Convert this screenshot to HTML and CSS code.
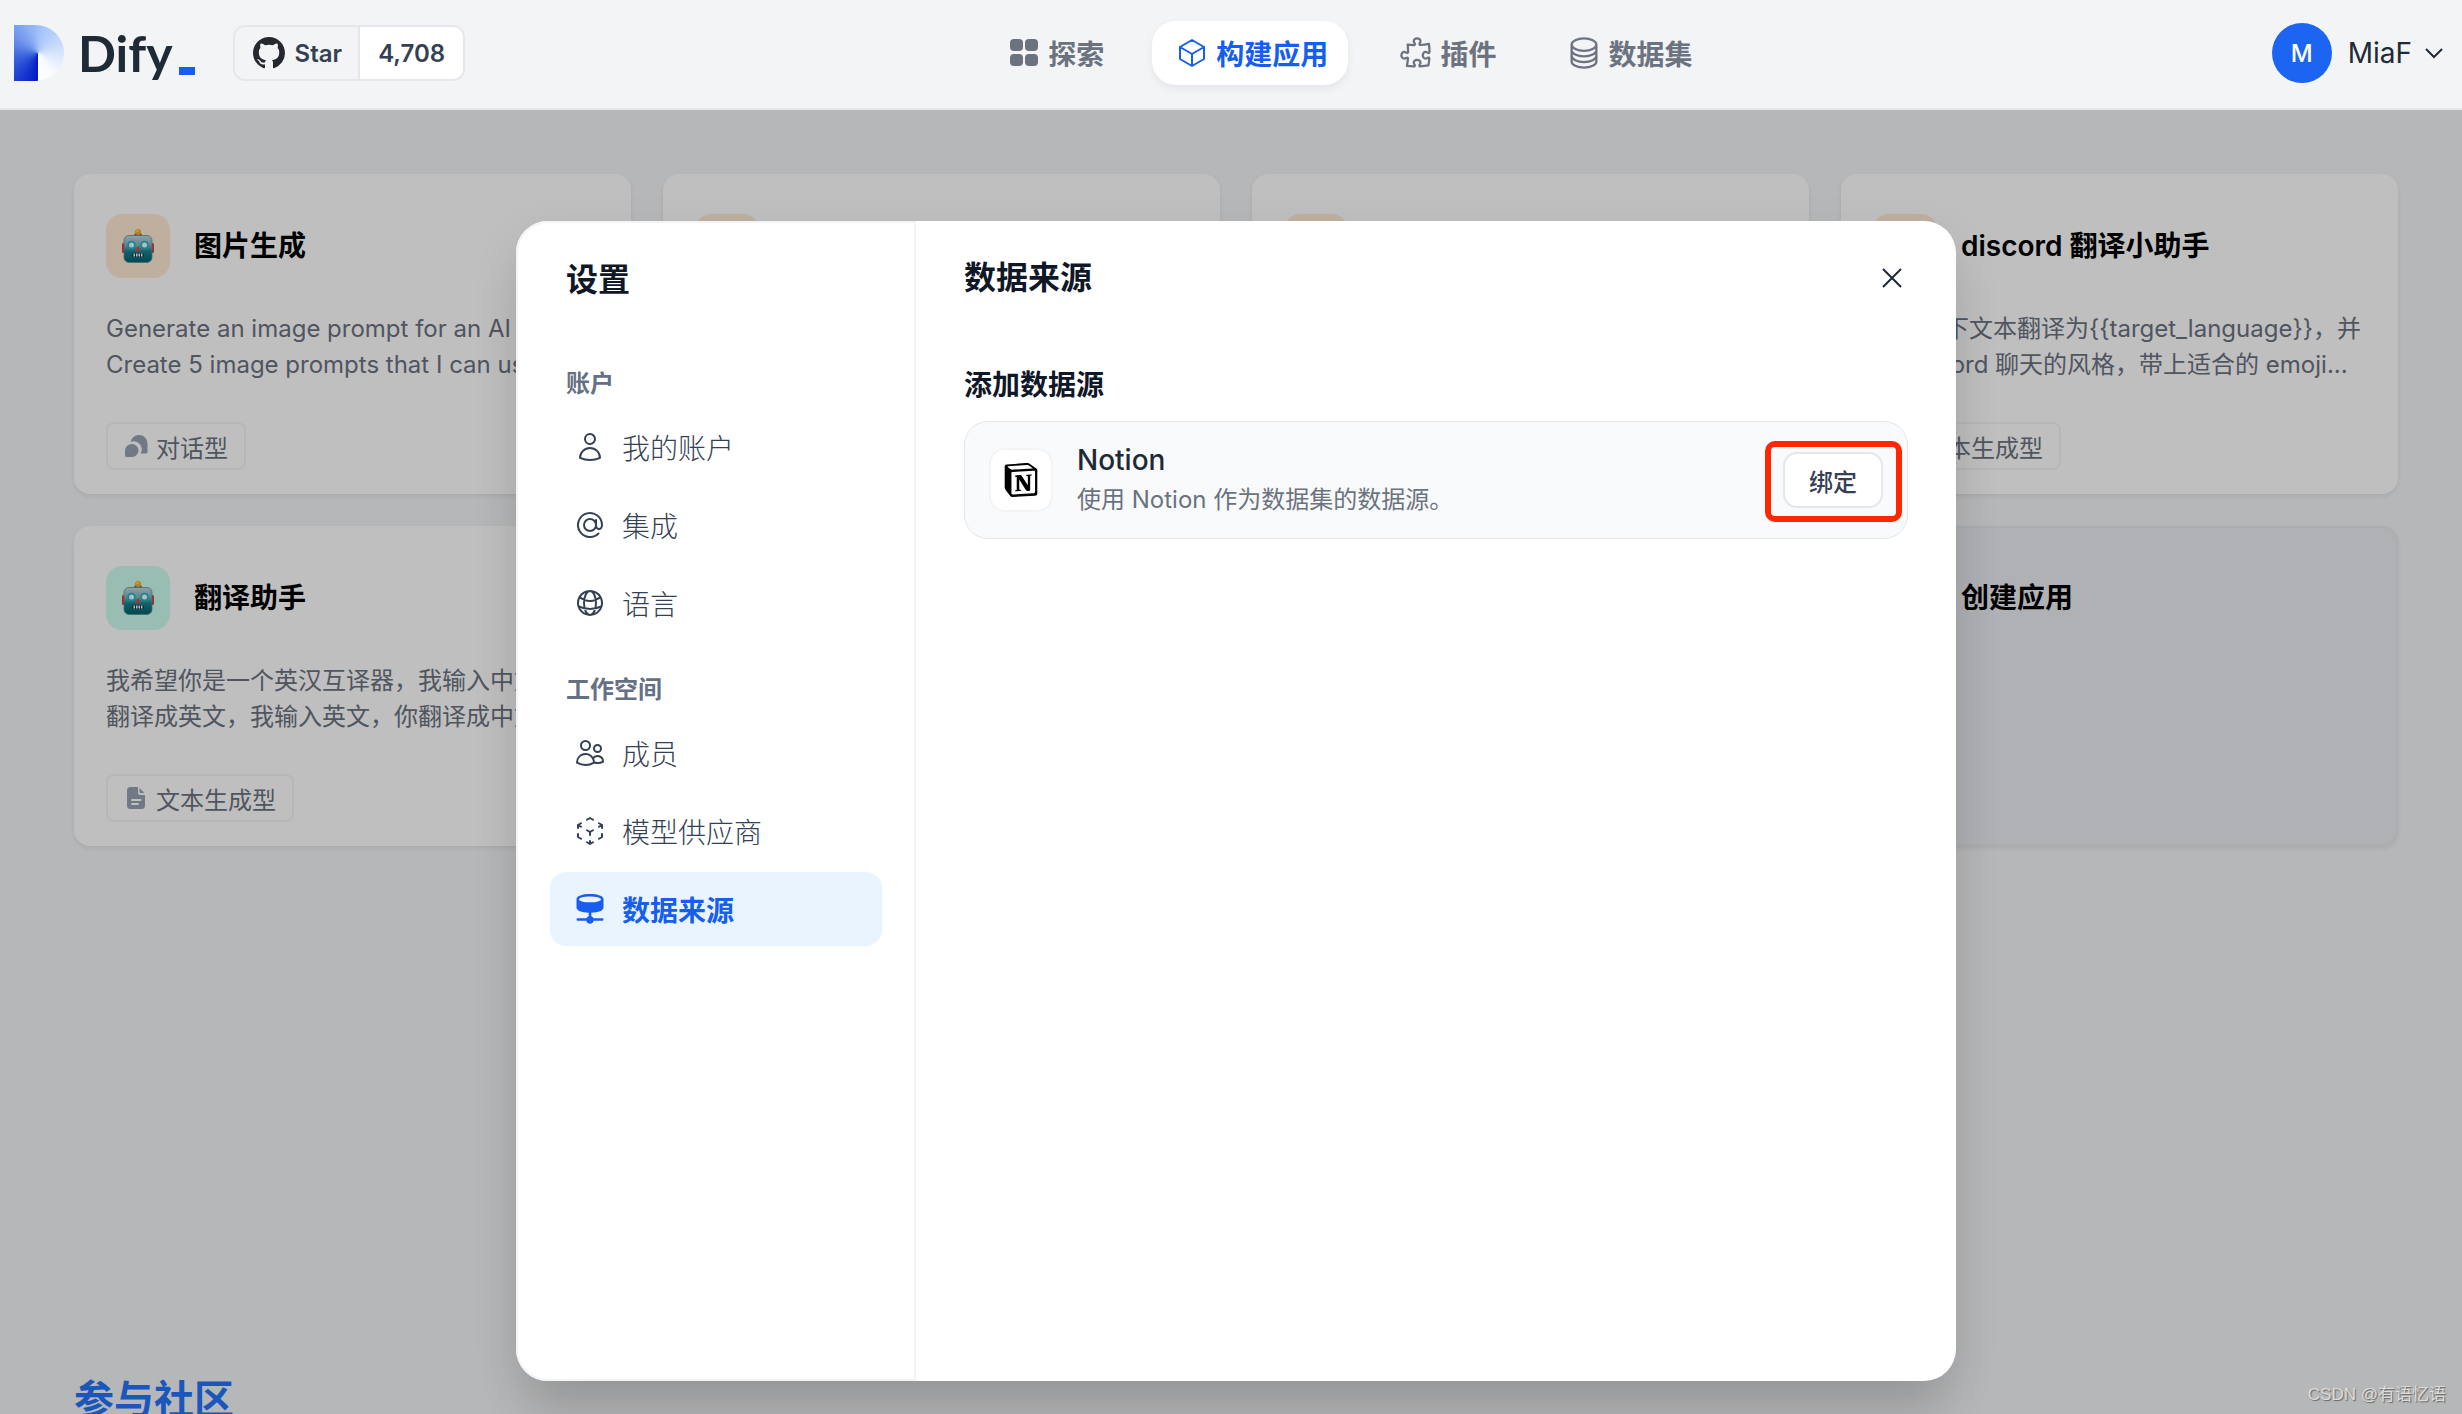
FILE: index.html
```html
<!DOCTYPE html>
<html lang="zh-CN">
<head>
<meta charset="utf-8">
<meta name="viewport" content="width=device-width, initial-scale=1">
<title>Dify</title>
<link rel="stylesheet" href="styles.css">
</head>
<body>
<svg class="defs" aria-hidden="true">
  <defs>
    <linearGradient id="face" x1="0" y1="0" x2="0" y2="1">
      <stop offset="0" stop-color="#c3d9dc"/><stop offset=".35" stop-color="#7fb5bd"/><stop offset=".6" stop-color="#14818d"/><stop offset="1" stop-color="#03606b"/>
    </linearGradient>
    <symbol id="robot" viewBox="0 0 32 34">
      <ellipse cx="16" cy="6" rx="4" ry="2" fill="#7c5c9c"/>
      <circle cx="16" cy="3" r="3" fill="#f7a816"/><circle cx="15.500" cy="2" r="1.200" fill="#ffdf6b"/>
      <rect x="0" y="14" width="4" height="10" rx="1.500" fill="#e0323c"/><rect x="28" y="14" width="4" height="10" rx="1.500" fill="#e0323c"/>
      <rect x="2" y="6.500" width="28" height="27" rx="5" fill="url(#face)" stroke="#5e8f96" stroke-width=".8"/>
      <circle cx="9.500" cy="16" r="4.200" fill="#19b5cb"/><circle cx="9.500" cy="16" r="2.500" fill="#eafcff"/>
      <circle cx="22.500" cy="16" r="4.200" fill="#19b5cb"/><circle cx="22.500" cy="16" r="2.500" fill="#eafcff"/>
      <path d="M16 17l2.600 5h-5.200z" fill="#ea4040"/>
      <rect x="10" y="24" width="12" height="4" rx="2" fill="#11343a"/>
      <path d="M11.500 24.500h1.500v3h-1.500zM14 24.500h1.500v3H14zM16.500 24.500H18v3h-1.500zM19 24.500h1.500v3H19z" fill="#fff"/>
    </symbol>
    <symbol id="doc" viewBox="0 0 24 24">
      <path fill="#98a2b3" fill-rule="evenodd" d="M3 4.500A3.500 3.500 0 016.500 1H14v5.500A2.500 2.500 0 0016.500 9H21v10.500a3.500 3.500 0 01-3.500 3.500h-11A3.500 3.500 0 013 19.500zM8 13a1 1 0 000 2h8.500a1 1 0 000-2zm0 4a1 1 0 000 2h6a1 1 0 000-2z"/>
      <path fill="#98a2b3" d="M15.500 2l5 5h-4a1 1 0 01-1-1z"/>
    </symbol>
  </defs>
</svg>

<div class="page">
  <header class="topbar">
    <div class="brand">
      <a class="logo" href="#" aria-label="Dify">
        <span class="logo-mark"></span>
        <span class="logo-text">Dify</span>
        <span class="logo-dash"></span>
      </a>
      <a class="stars" href="#">
        <span class="stars-label">
          <svg width="32" height="32" viewBox="0 0 16 16" fill="#24292f"><path d="M8 0C3.580 0 0 3.580 0 8c0 3.540 2.290 6.530 5.470 7.590.4.070.55-.17.55-.38 0-.19-.01-.82-.01-1.490-2.010.37-2.530-.49-2.690-.94-.09-.23-.48-.94-.82-1.130-.28-.15-.68-.52-.01-.53.63-.01 1.080.58 1.230.82.72 1.210 1.870.87 2.330.66.070-.52.28-.87.51-1.070-1.780-.2-3.640-.89-3.640-3.950 0-.87.31-1.590.82-2.150-.08-.2-.36-1.020.08-2.120 0 0 .67-.21 2.200.82.64-.18 1.320-.27 2-.27s1.360.09 2 .27c1.530-1.040 2.200-.82 2.200-.82.44 1.100.16 1.920.08 2.120.51.56.82 1.270.82 2.150 0 3.070-1.870 3.750-3.650 3.950.29.25.54.73.54 1.480 0 1.070-.01 1.930-.01 2.200 0 .21.15.46.55.38A8.010 8.010 0 0016 8c0-4.420-3.580-8-8-8z"/></svg>
          Star
        </span>
        <span class="stars-count">4,708</span>
      </a>
    </div>
    <nav class="nav">
      <a href="#"><svg viewBox="0 0 36 36" fill="currentColor"><rect x="4" y="4" width="13" height="12" rx="4"/><rect x="19" y="4" width="13" height="12" rx="4"/><rect x="4" y="19" width="13" height="12" rx="4"/><rect x="19" y="19" width="13" height="12" rx="4"/></svg>探索</a>
      <a href="#" class="current"><svg class="line" viewBox="-1.500 -1.500 27 27"><path d="M21 7.500l-9-5.250L3 7.500m18 0l-9 5.250m9-5.250v9l-9 5.250M3 7.500l9 5.250M3 7.500v9l9 5.250m0-9v9"/></svg>构建应用</a>
      <a href="#"><svg class="line" viewBox="0 0 24 24"><path d="M14.250 6.087c0-.355.186-.676.401-.959.221-.29.349-.634.349-1.003 0-1.036-1.007-1.875-2.250-1.875s-2.250.84-2.250 1.875c0 .369.128.713.349 1.003.215.283.401.604.401.959v0a.64.64 0 01-.657.643 48.390 48.390 0 01-4.163-.3c.186 1.613.293 3.250.315 4.907a.656.656 0 01-.658.663v0c-.355 0-.676-.186-.959-.401a1.647 1.647 0 00-1.003-.349c-1.036 0-1.875 1.007-1.875 2.250s.84 2.250 1.875 2.250c.369 0 .713-.128 1.003-.349.283-.215.604-.401.959-.401v0c.31 0 .555.26.532.57a48.039 48.039 0 01-.642 5.056c1.518.19 3.058.309 4.616.354a.64.64 0 00.657-.643v0c0-.355-.186-.676-.401-.959a1.647 1.647 0 01-.349-1.003c0-1.035 1.008-1.875 2.250-1.875 1.243 0 2.250.84 2.250 1.875 0 .369-.128.713-.349 1.003-.215.283-.4.604-.4.959v0c0 .333.277.599.61.58a48.100 48.100 0 005.427-.63 48.050 48.050 0 00.582-4.717.532.532 0 00-.533-.57v0c-.355 0-.676.186-.959.401-.29.221-.634.349-1.003.349-1.035 0-1.875-1.007-1.875-2.250s.84-2.250 1.875-2.250c.37 0 .713.128 1.003.349.283.215.604.401.96.401v0a.656.656 0 00.658-.663 48.422 48.422 0 00-.37-5.360c-1.886.342-3.810.574-5.766.689a.578.578 0 01-.61-.58v0z"/></svg>插件</a>
      <a href="#"><svg class="line" viewBox="0 0 24 24"><path d="M20.250 6.375c0 2.278-3.694 4.125-8.250 4.125S3.750 8.653 3.750 6.375m16.500 0c0-2.278-3.694-4.125-8.250-4.125S3.750 4.097 3.750 6.375m16.500 0v11.250c0 2.278-3.694 4.125-8.250 4.125s-8.250-1.847-8.250-4.125V6.375m16.500 3.750v3.750C20.250 16.153 16.556 18 12 18s-8.250-1.847-8.250-4.125v-3.750m16.500 0c0 2.278-3.694 4.125-8.250 4.125s-8.250-1.847-8.250-4.125"/></svg>数据集</a>
    </nav>
    <button class="user" type="button">
      <span class="avatar">M</span>
      MiaF
      <svg width="20" height="20" viewBox="0 0 20 20" fill="none" stroke="#1f2a37" stroke-width="2"><path d="M2 6l8 8 8-8"/></svg>
    </button>
  </header>

  <main class="stage">
    <section class="apps">
      <article class="card">
        <div class="card-head"><span class="tile"><svg><use href="#robot"/></svg></span><h3>图片生成</h3></div>
        <p>Generate an image prompt for an AI art.<br>Create 5 image prompts that I can use.</p>
        <span class="tag"><svg viewBox="0 0 24 24" fill="#98a2b3"><path d="M6.500 8A8.500 8.500 0 0115 1a8.500 8.500 0 018.500 8.500V18a1.500 1.500 0 01-1.500 1.500h-5.500A8 8 0 006.500 8z"/><path d="M8 10a6.500 6.500 0 110 13H2.500A1.500 1.500 0 011 21.500v-5A6.800 6.800 0 018 10z"/></svg>对话型</span>
      </article>
      <article class="card"><div class="card-head"><span class="tile"><svg><use href="#robot"/></svg></span></div></article>
      <article class="card"><div class="card-head"><span class="tile"><svg><use href="#robot"/></svg></span></div></article>
      <article class="card">
        <div class="card-head"><span class="tile"><svg><use href="#robot"/></svg></span><h3>discord 翻译小助手</h3></div>
        <p>请将以下文本翻译为{{target_language}}，并<br>用 discord 聊天的风格，带上适合的 emoji...</p>
        <span class="tag"><svg><use href="#doc"/></svg>文本生成型</span>
      </article>
      <article class="card">
        <div class="card-head"><span class="tile tile-teal"><svg><use href="#robot"/></svg></span><h3>翻译助手</h3></div>
        <p>我希望你是一个英汉互译器，我输入中文，你翻译成英文，我输入英文，你翻译成中文。</p>
        <span class="tag"><svg><use href="#doc"/></svg>文本生成型</span>
      </article>
      <article class="card"></article>
      <article class="card"></article>
      <article class="card card-new">
        <div class="card-head"><span class="tile tile-plus"></span><h3>创建应用</h3></div>
      </article>
    </section>
    <footer class="community"><h2>参与社区</h2></footer>

    <div class="backdrop">
      <div class="dialog" role="dialog" aria-modal="true" aria-labelledby="settings-title">
        <aside class="side">
          <h2 id="settings-title">设置</h2>
          <h3>账户</h3>
          <ul>
            <li><a href="#"><svg class="line" viewBox="0 0 24 24"><path d="M15.750 6a3.750 3.750 0 11-7.500 0 3.750 3.750 0 017.500 0zM4.501 20.118a7.500 7.500 0 0114.998 0A17.933 17.933 0 0112 21.750c-2.676 0-5.216-.584-7.499-1.632z"/></svg>我的账户</a></li>
            <li><a href="#"><svg class="line" viewBox="0 0 24 24"><path d="M16.500 12a4.500 4.500 0 11-9 0 4.500 4.500 0 019 0zm0 0c0 1.657 1.007 3 2.250 3S21 13.657 21 12a9 9 0 10-2.636 6.364M16.500 12V8.250"/></svg>集成</a></li>
            <li><a href="#"><svg class="line" viewBox="0 0 24 24"><path d="M12 21a9.004 9.004 0 008.716-6.747M12 21a9.004 9.004 0 01-8.716-6.747M12 21c2.485 0 4.500-4.030 4.500-9S14.485 3 12 3m0 18c-2.485 0-4.500-4.030-4.500-9S9.515 3 12 3m0 0a8.997 8.997 0 017.843 4.582M12 3a8.997 8.997 0 00-7.843 4.582m15.686 0A11.953 11.953 0 0112 10.500c-2.998 0-5.740-1.100-7.843-2.918m15.686 0A8.959 8.959 0 0121 12c0 .778-.099 1.533-.284 2.253m0 0A17.919 17.919 0 0112 16.500c-3.162 0-6.133-.815-8.716-2.247m0 0A9.015 9.015 0 013 12c0-1.605.42-3.113 1.157-4.418"/></svg>语言</a></li>
          </ul>
          <h3>工作空间</h3>
          <ul>
            <li><a href="#"><svg class="line" viewBox="0 0 24 24"><path d="M15 19.128a9.380 9.380 0 002.625.372 9.337 9.337 0 004.121-.952 4.125 4.125 0 00-7.533-2.493M15 19.128v-.003c0-1.113-.285-2.160-.786-3.070M15 19.128v.106A12.318 12.318 0 018.624 21c-2.331 0-4.512-.645-6.374-1.766l-.001-.109a6.375 6.375 0 0111.964-3.070M12 6.375a3.375 3.375 0 11-6.750 0 3.375 3.375 0 016.750 0zm8.250 2.250a2.625 2.625 0 11-5.250 0 2.625 2.625 0 015.250 0z"/></svg>成员</a></li>
            <li><a href="#"><svg class="line" viewBox="0 0 24 24"><path d="M21 7.500l-2.250-1.313M21 7.500v2.250m0-2.250l-2.250 1.313M3 7.500l2.250-1.313M3 7.500l2.250 1.313M3 7.500v2.250m9 3l2.250-1.313M12 12.750l-2.250-1.313M12 12.750V15m0 6.750l2.250-1.313M12 21.750V19.500m0 2.250l-2.250-1.313m0-16.875L12 2.250l2.250 1.313M21 14.250v2.250l-2.250 1.313m-13.500 0L3 16.500v-2.250"/></svg>模型供应商</a></li>
            <li><a href="#" class="selected"><svg viewBox="0 0 32 32" fill="currentColor"><path fill-rule="evenodd" d="M16 1c7.500 0 13.500 2 13.500 5v8.500c0 3-5 5-12.200 5.200v3.600a3.700 3.700 0 012.300 1.900h8.600a1.300 1.300 0 010 2.600h-8.600a3.700 3.700 0 01-7.200 0H3.800a1.300 1.300 0 010-2.600h8.600a3.700 3.700 0 012.300-1.900v-3.600C7.500 19.500 2.500 17.500 2.500 14.500V6c0-3 6-5 13.500-5zm0 2.500c-6.200 0-11 1.300-11 2.900s4.800 2.900 11 2.900 11-1.300 11-2.900-4.800-2.900-11-2.900z"/></svg>数据来源</a></li>
          </ul>
        </aside>
        <section class="content">
          <div class="content-head">
            <h2>数据来源</h2>
            <button class="close" type="button" aria-label="关闭"><svg width="24" height="24" viewBox="0 0 24 24" fill="none" stroke="#1d2939" stroke-width="2"><path d="M3 3l18 18M21 3L3 21"/></svg></button>
          </div>
          <h3>添加数据源</h3>
          <div class="source">
            <span class="source-icon"><svg width="34" height="34" viewBox="0 0 24 24"><path d="M4.459 4.208c.746.606 1.026.56 2.428.466l13.215-.793c.28 0 .047-.28-.046-.326L17.860 1.968c-.42-.326-.981-.7-2.055-.607L3.010 2.295c-.466.046-.56.28-.374.466zm.793 3.080v13.904c0 .747.373 1.027 1.214.98l14.523-.84c.841-.046.935-.56.935-1.167V6.354c0-.606-.233-.933-.748-.887l-15.177.887c-.56.047-.747.327-.747.933zm14.337.745c.093.42 0 .84-.42.888l-.7.14v10.264c-.608.327-1.168.514-1.635.514-.748 0-.935-.234-1.495-.933l-4.577-7.186v6.952L12.210 19s0 .84-1.168.84l-3.222.186c-.093-.186 0-.653.327-.746l.84-.233V9.854L7.822 9.760c-.094-.42.14-1.026.793-1.073l3.456-.233 4.764 7.279v-6.440l-1.215-.139c-.093-.514.28-.887.747-.933zM1.936 1.035l13.310-.98c1.634-.14 2.055-.047 3.082.7l4.249 2.986c.7.513.934.653.934 1.213v16.378c0 1.026-.373 1.634-1.680 1.726l-15.458.934c-.98.047-1.448-.093-1.962-.747l-3.129-4.060c-.56-.747-.793-1.306-.793-1.960V2.667c0-.839.374-1.540 1.447-1.632z"/></svg></span>
            <div class="source-text">
              <h4>Notion</h4>
              <p>使用 Notion 作为数据集的数据源。</p>
            </div>
            <div class="bind-wrap"><button class="bind" type="button">绑定</button></div>
          </div>
        </section>
      </div>
    </div>
  </main>
  <span class="watermark">CSDN @有语忆语</span>
</div>
</body>
</html>
```
FILE: styles.css
```css
* { box-sizing: border-box; }
body, h2, h3, h4, p, ul { margin: 0; padding: 0; }
body {
  font-family: Inter, "Noto Sans CJK SC", sans-serif;
  background: #f3f4f6;
  color: #101828;
}
a { color: inherit; text-decoration: none; }
button { font: inherit; color: inherit; background: none; border: 0; padding: 0; cursor: pointer; }
ul { list-style: none; }
.defs { position: absolute; width: 0; height: 0; }
.line { fill: none; stroke: currentColor; stroke-width: 1.5; stroke-linecap: round; stroke-linejoin: round; }

.page { position: relative; display: flex; flex-direction: column; height: 100vh; overflow: hidden; }

/* Top bar */
.topbar {
  flex: none;
  display: flex;
  align-items: center;
  justify-content: space-between;
  height: 110px;
  padding: 0 18px 2px 14px;
  border-bottom: 2px solid #e5e7eb;
}
.brand { display: flex; align-items: center; gap: 38px; }
.logo { display: flex; align-items: center; }
.logo-mark {
  width: 50px;
  height: 56px;
  margin-right: 12px;
  border-radius: 0 28px 28px 0;
  background: conic-gradient(from 180deg at 48% 50%, #0019c4 0deg, #3c66dd 80deg, #7398ee 130deg, #a3c3f8 185deg, #cfe0fc 260deg, #f7f9ff 320deg, #fff 360deg);
}
.logo-text { font: 700 50px/56px Lato, sans-serif; color: #1f2a37; padding-left: 2px; }
.logo-dash { width: 16px; height: 8px; margin: 36px 0 0 6px; background: #155eef; }
.stars {
  display: flex;
  height: 56px;
  border: 2px solid #e5e7eb;
  border-radius: 12px;
  overflow: hidden;
  font-weight: 600;
  font-size: 24px;
  color: #344054;
}
.stars-label { display: flex; align-items: center; gap: 10px; padding: 0 16px 0 18px; border-right: 2px solid #e5e7eb; }
.stars-count { display: flex; align-items: center; padding: 0 18px; background: #fff; }

.nav { display: flex; gap: 28px; }
.nav a {
  display: flex;
  align-items: center;
  gap: 6px;
  height: 64px;
  padding: 0 20px 0 22px;
  border-radius: 24px;
  font-size: 28px;
  font-weight: 600;
  color: #6b7280;
}
.nav svg { width: 36px; height: 36px; }
.nav .current { color: #155eef; background: #fff; box-shadow: 0 4px 8px rgba(16, 24, 40, .06); }

.user { display: flex; align-items: center; gap: 12px; padding-left: 40px; font-size: 28px; color: #1f2a37; }
.avatar {
  display: flex;
  align-items: center;
  justify-content: center;
  width: 60px;
  height: 60px;
  margin-right: 4px;
  border-radius: 50%;
  background: #1c64f2;
  color: #fff;
  font-size: 24px;
  font-weight: 500;
}

/* App grid */
.stage { position: relative; flex: 1; min-height: 0; overflow: hidden; }
.apps {
  display: grid;
  grid-template-columns: repeat(4, minmax(0, 1fr));
  grid-auto-rows: 320px;
  gap: 32px;
  align-content: start;
  min-height: calc(100vh - 152px);
  padding: 64px 64px 32px 74px;
}
.card {
  padding: 40px 32px 24px;
  border-radius: 16px;
  background: #fff;
  box-shadow: 0 2px 4px rgba(16, 24, 40, .08);
}
.card-new { background: #ebecf0; border: 2px solid #e5e7eb; padding: 38px 30px; }
.card-head { display: flex; align-items: center; gap: 24px; height: 64px; }
.card h3 { font-size: 28px; line-height: 40px; font-weight: 600; color: #000; white-space: nowrap; }
.tile { display: flex; align-items: center; justify-content: center; width: 64px; height: 64px; border-radius: 16px; background: #ffead5; }
.tile svg { width: 32px; height: 36px; }
.tile-teal { background: #ccfbef; }
.tile-plus { background: #e5e7eb; }
.card p { height: 72px; margin: 33px 0 39px; font-size: 24px; line-height: 36px; color: #6b7280; overflow: hidden; }
.tag {
  display: inline-flex;
  align-items: center;
  gap: 8px;
  height: 48px;
  padding: 0 16px;
  border: 2px solid #f3f4f6;
  border-radius: 8px;
  font-size: 24px;
  color: #6b7280;
}
.tag svg { width: 24px; height: 24px; }
.community { padding: 0 74px; }
.community h2 { font-size: 40px; line-height: 56px; font-weight: 600; color: #2474fa; }

/* Settings dialog */
.backdrop {
  position: absolute;
  inset: 0;
  display: flex;
  justify-content: center;
  align-items: flex-start;
  padding: 111px 0 33px 10px;
  background: rgba(0, 0, 0, .25);
}
.dialog {
  display: flex;
  width: 100%;
  max-width: 1440px;
  height: 100%;
  border-radius: 32px;
  background: #fff;
  box-shadow: 0 40px 50px -10px rgba(0, 0, 0, .12), 0 16px 50px rgba(0, 0, 0, .08);
}
.side { flex: none; width: 400px; padding: 32px; border: 2px solid #f3f4f6; border-radius: 32px 0 0 32px; }
.side h2 { padding-left: 16px; font-size: 32px; line-height: 50px; font-weight: 600; margin-bottom: 61px; }
.side h3 { padding-left: 16px; font-size: 24px; line-height: 36px; font-weight: 600; color: #667085; margin-bottom: 8px; }
.side ul { display: grid; gap: 4px; margin-bottom: 32px; }
.side a {
  display: flex;
  align-items: center;
  gap: 16px;
  height: 74px;
  padding: 0 24px;
  border-radius: 16px;
  font-size: 28px;
  font-weight: 300;
  color: #344054;
}
.side svg { width: 32px; height: 32px; }
.side .selected { background: #eaf4ff; color: #155eef; font-weight: 600; }

.content { flex: 1; min-width: 0; padding: 32px 48px; }
.content-head { display: flex; align-items: center; justify-content: space-between; height: 50px; }
.content h2 { font-size: 32px; line-height: 50px; font-weight: 600; }
.close { display: flex; padding: 4px; }
.content h3 { margin: 62px 0 16px; font-size: 28px; line-height: 40px; font-weight: 600; }
.source {
  display: flex;
  align-items: center;
  padding: 18px 24px;
  border: 1px solid #e5e7eb;
  border-radius: 24px;
  background: #f9fafb;
}
.source-icon {
  display: flex;
  align-items: center;
  justify-content: center;
  width: 64px;
  height: 64px;
  margin-right: 24px;
  border: 2px solid #f3f4f6;
  border-radius: 16px;
  background: #fff;
}
.source-text { flex: 1; line-height: 40px; }
.source h4 { font-size: 28px; font-weight: 500; color: #1f2a37; }
.source p { font-size: 24px; color: #6b7280; }
.bind-wrap { position: relative; }
.bind-wrap::after {
  content: "";
  position: absolute;
  inset: -11px -19px -14px -18px;
  border: 6px solid #ff2600;
  border-radius: 10px;
  pointer-events: none;
}
.bind {
  display: block;
  height: 56px;
  padding: 0 24px;
  border: 2px solid #e5e7eb;
  border-radius: 14px;
  background: #fff;
  font-size: 24px;
  font-weight: 500;
  color: #344054;
}

.watermark {
  position: absolute;
  right: 16px;
  bottom: 6px;
  font: 17px/26px "Liberation Sans", "Noto Sans CJK SC", sans-serif;
  color: #dcdcdc;
  text-shadow: 1px 1px 1px #666;
}
```
